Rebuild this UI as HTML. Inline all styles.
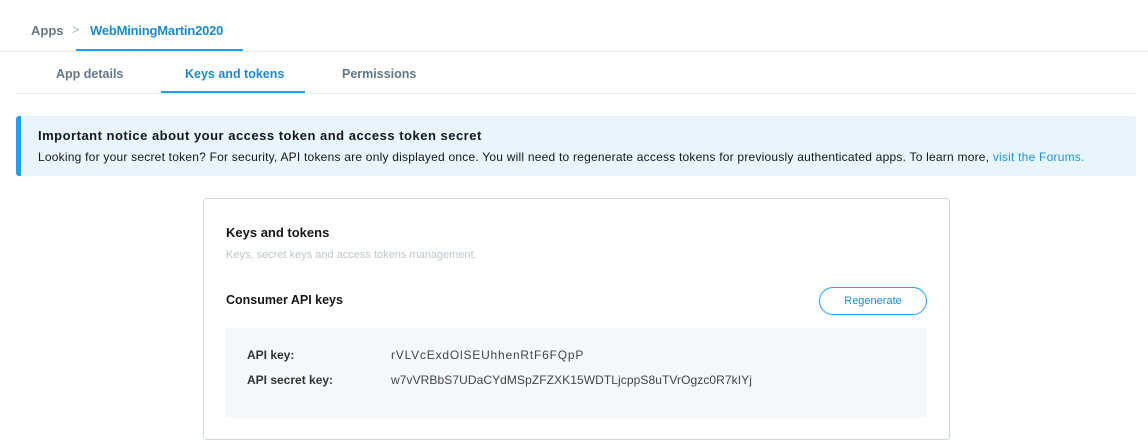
<!DOCTYPE html><html><head><style>
body{margin:0;width:1148px;height:415px;overflow:hidden;background:#fff;font-family:"Liberation Sans",sans-serif;color:#14171a;position:relative}
.a{position:absolute;white-space:nowrap}
</style></head><body>
<div class="a" style="left:31px;top:23px;font-size:13px;font-weight:bold;color:#657786">Apps</div>
<div class="a" style="left:72px;top:22px;font-size:13px;color:#aab8c2">&gt;</div>
<div class="a" style="left:90px;top:23px;font-size:13px;font-weight:bold;color:#1d8ad0;letter-spacing:-0.2px">WebMiningMartin2020</div>
<div class="a" style="left:76px;top:49px;width:167px;height:2px;background:#1da1f2"></div>
<div class="a" style="left:0;top:51px;width:1148px;height:1px;background:#e6ecf0"></div>
<div class="a" style="left:56px;top:67px;font-size:12.5px;font-weight:bold;color:#657786">App details</div>
<div class="a" style="left:185px;top:67px;font-size:12.5px;font-weight:bold;color:#1d8ad0">Keys and tokens</div>
<div class="a" style="left:342px;top:67px;font-size:12.5px;font-weight:bold;color:#657786">Permissions</div>
<div class="a" style="left:161px;top:91px;width:144px;height:2px;background:#1da1f2"></div>
<div class="a" style="left:16px;top:93px;width:1120px;height:1px;background:#e6ecf0"></div>
<div class="a" style="left:16px;top:116px;width:1120px;height:60px;background:#e8f5fd;border-radius:3px"></div>
<div class="a" style="left:16px;top:116px;width:5px;height:60px;background:#1da1f2;border-radius:3px 0 0 3px"></div>
<div class="a" style="left:38px;top:128px;font-size:13px;font-weight:bold;letter-spacing:0.5px">Important notice about your access token and access token secret</div>
<div class="a" style="left:38px;top:150px;font-size:12px;color:#14171a;letter-spacing:0.22px">Looking for your secret token? For security, API tokens are only displayed once. You will need to regenerate access tokens for previously authenticated apps. To learn more, <span style="color:#1b95e0">visit the Forums.</span></div>
<div class="a" style="left:203px;top:198px;width:745px;height:240px;border:1px solid #ccd6dd;border-radius:4px"></div>
<div class="a" style="left:226px;top:225px;font-size:13px;font-weight:bold">Keys and tokens</div>
<div class="a" style="left:226px;top:249px;font-size:11px;color:#bcc6ce">Keys, secret keys and access tokens management.</div>
<div class="a" style="left:226px;top:293px;font-size:12.5px;font-weight:bold">Consumer API keys</div>
<div class="a" style="left:819px;top:287px;width:106px;height:26px;border:1px solid #1da1f2;border-radius:14px;text-align:center;line-height:26px;font-size:11px;color:#1d8ad0">Regenerate</div>
<div class="a" style="left:225px;top:328px;width:702px;height:90px;background:#f5f8fa"></div>
<div class="a" style="left:247px;top:348px;font-size:12px;font-weight:bold;color:#333">API key:</div>
<div class="a" style="left:391px;top:348px;font-size:12px;color:#444;letter-spacing:0.8px">rVLVcExdOlSEUhhenRtF6FQpP</div>
<div class="a" style="left:247px;top:373px;font-size:12px;font-weight:bold;color:#333">API secret key:</div>
<div class="a" style="left:391px;top:373px;font-size:12px;color:#444;letter-spacing:0.08px">w7vVRBbS7UDaCYdMSpZFZXK15WDTLjcppS8uTVrOgzc0R7kIYj</div>
</body></html>
